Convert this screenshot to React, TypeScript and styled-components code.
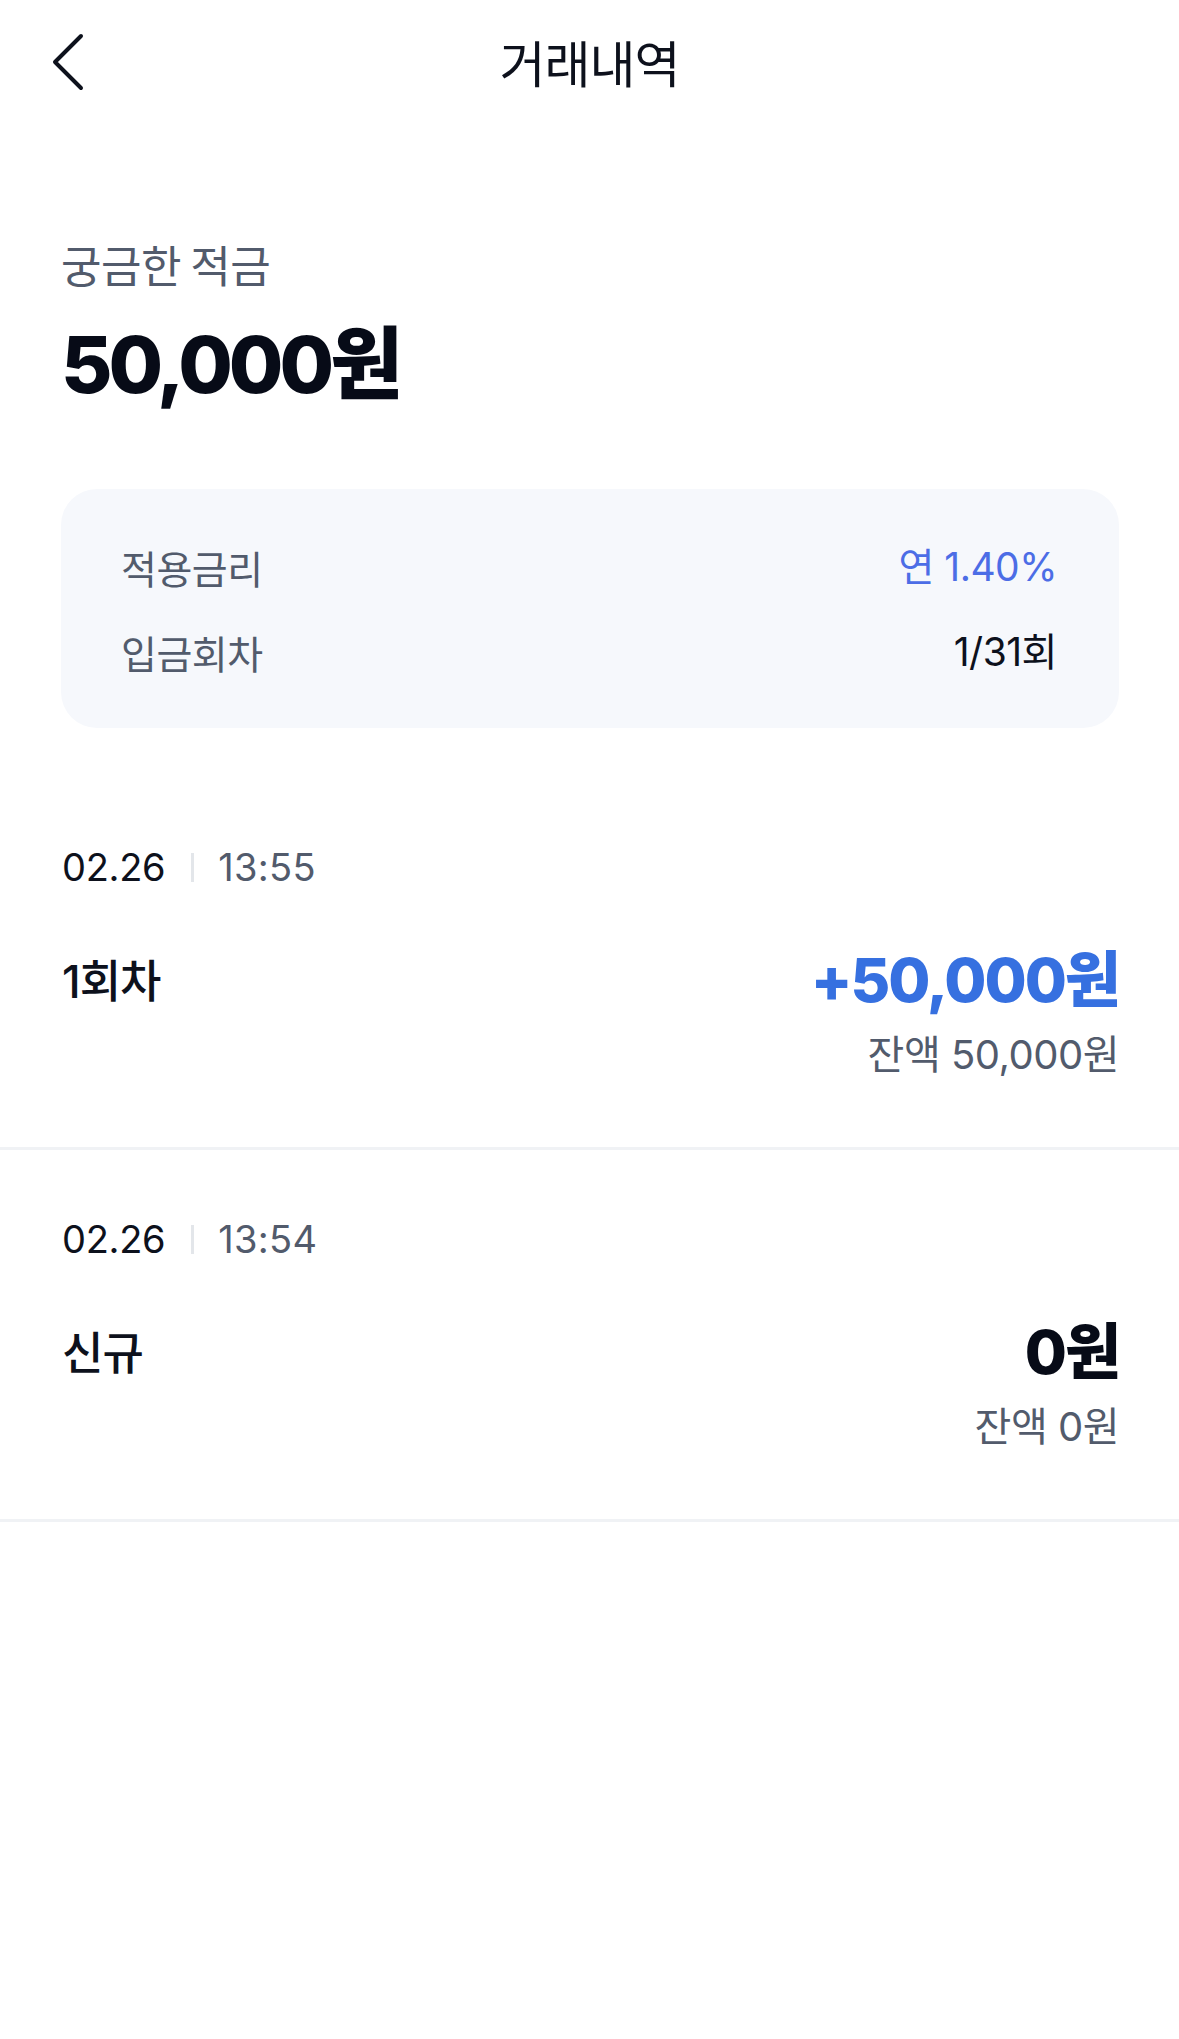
import * as React from 'react';
import styled, { createGlobalStyle } from 'styled-components';

const GlobalStyle = createGlobalStyle`
  html, body {
    margin: 0;
    padding: 0;
    background: #ffffff;
  }
  body {
    font-family: "Inter", "Noto Sans CJK KR", sans-serif;
    color: #191f28;
    -webkit-font-smoothing: antialiased;
  }
`;

interface Transaction {
  date: string;
  time: string;
  title: string;
  amount: string;
  balance: string;
  deposit: boolean;
}

const transactions: Transaction[] = [
  { date: '02.26', time: '13:55', title: '1회차', amount: '+50,000원', balance: '잔액 50,000원', deposit: true },
  { date: '02.26', time: '13:54', title: '신규', amount: '0원', balance: '잔액 0원', deposit: false },
];

const BackIcon = () => (
  <svg width="34" height="60" viewBox="0 0 34 60" fill="none">
    <path d="M29 4 L3 30 L29 56" stroke="#0d111c" strokeWidth="4" strokeLinecap="round" strokeLinejoin="round" />
  </svg>
);

export default function App() {
  return (
    <Page>
      <GlobalStyle />
      <Header>
        <BackButton aria-label="뒤로">
          <BackIcon />
        </BackButton>
        <HeaderTitle>거래내역</HeaderTitle>
      </Header>

      <Summary>
        <ProductName>궁금한 적금</ProductName>
        <TotalAmount>50,000원</TotalAmount>

        <InfoCard>
          <InfoRow>
            <InfoLabel>적용금리</InfoLabel>
            <InfoValue accent>연 1.40%</InfoValue>
          </InfoRow>
          <InfoRow>
            <InfoLabel>입금회차</InfoLabel>
            <InfoValue>1/31회</InfoValue>
          </InfoRow>
        </InfoCard>
      </Summary>

      <TransactionList>
        {transactions.map((tx, i) => (
          <TransactionItem key={i}>
            <DateLine>
              <DateText>{tx.date}</DateText>
              <Separator />
              <TimeText>{tx.time}</TimeText>
            </DateLine>
            <MainRow>
              <TxTitle>{tx.title}</TxTitle>
              <TxAmount deposit={tx.deposit}>{tx.amount}</TxAmount>
            </MainRow>
            <Balance>{tx.balance}</Balance>
          </TransactionItem>
        ))}
      </TransactionList>
    </Page>
  );
}

const Page = styled.div`
  width: 100%;
  min-height: 2039px;
  background: #ffffff;
`;

const Header = styled.header`
  position: relative;
  height: 124px;
  display: flex;
  align-items: center;
  justify-content: center;
`;

const BackButton = styled.button`
  position: absolute;
  left: 52px;
  top: 32px;
  padding: 0;
  border: none;
  background: none;
  display: flex;
`;

const HeaderTitle = styled.h1`
  margin: -2px 0 0 0;
  font-family: "Noto Sans CJK KR", sans-serif;
  font-size: 50px;
  font-weight: 400;
  line-height: 60px;
  color: #0d111c;
  letter-spacing: -1px;
`;

const Summary = styled.section`
  padding: 112px 60px 0 61px;
`;

const ProductName = styled.div`
  font-family: "Noto Sans CJK KR", sans-serif;
  font-size: 44px;
  line-height: 56px;
  color: #525b6c;
  letter-spacing: -0.5px;
`;

const TotalAmount = styled.div`
  margin-top: 22px;
  font-size: 79px;
  font-weight: 800;
  line-height: 100px;
  letter-spacing: -4px;
  color: #070b17;
`;

const InfoCard = styled.div`
  margin-top: 75px;
  background: #f6f8fc;
  border-radius: 36px;
  padding: 53px 62px 51px 60px;
  display: flex;
  flex-direction: column;
  gap: 35px;
`;

const InfoRow = styled.div`
  display: flex;
  justify-content: space-between;
  align-items: center;
  line-height: 50px;
  font-size: 39px;
`;

const InfoLabel = styled.span`
  font-family: "Noto Sans CJK KR", sans-serif;
  color: #525b6c;
  letter-spacing: -0.5px;
`;

const InfoValue = styled.span<{ accent?: boolean }>`
  color: ${p => (p.accent ? '#4c6de6' : '#0d111c')};
  letter-spacing: -0.5px;
`;

const TransactionList = styled.div`
  margin-top: 50px;
`;

const TransactionItem = styled.div`
  padding: 64px 60px 67px 62px;
  border-bottom: 3px solid #f0f2f5;
`;

const DateLine = styled.div`
  display: flex;
  align-items: center;
  height: 50px;
  font-size: 38px;
`;

const DateText = styled.span`
  color: #0d111c;
  letter-spacing: -0.3px;
`;

const Separator = styled.span`
  width: 3px;
  height: 29px;
  background: #e3e6ea;
  margin: 0 24px 0 26px;
`;

const TimeText = styled.span`
  color: #525b6c;
  letter-spacing: 0.3px;
`;

const MainRow = styled.div`
  margin-top: 48px;
  height: 70px;
  display: flex;
  justify-content: space-between;
  align-items: center;
`;

const TxTitle = styled.span`
  font-size: 45px;
  font-weight: 500;
  color: #0d111c;
  letter-spacing: -1px;
  margin-top: 6px;
`;

const TxAmount = styled.span<{ deposit: boolean }>`
  font-size: 61px;
  font-weight: 800;
  letter-spacing: -2px;
  color: ${p => (p.deposit ? '#3670e0' : '#070b17')};
`;

const Balance = styled.div`
  margin-top: 20px;
  text-align: right;
  font-size: 40px;
  line-height: 50px;
  color: #525b6c;
  letter-spacing: -0.5px;
`;
